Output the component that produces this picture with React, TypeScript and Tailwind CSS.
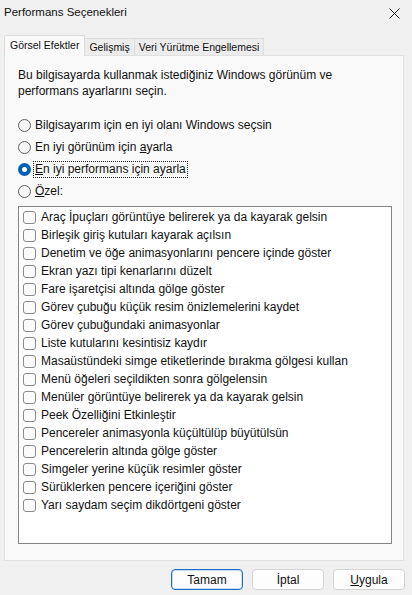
import React from 'react';

const effects = [
  'Araç İpuçları görüntüye belirerek ya da kayarak gelsin',
  'Birleşik giriş kutuları kayarak açılsın',
  'Denetim ve öğe animasyonlarını pencere içinde göster',
  'Ekran yazı tipi kenarlarını düzelt',
  'Fare işaretçisi altında gölge göster',
  'Görev çubuğu küçük resim önizlemelerini kaydet',
  'Görev çubuğundaki animasyonlar',
  'Liste kutularını kesintisiz kaydır',
  'Masaüstündeki simge etiketlerinde bırakma gölgesi kullan',
  'Menü öğeleri seçildikten sonra gölgelensin',
  'Menüler görüntüye belirerek ya da kayarak gelsin',
  'Peek Özelliğini Etkinleştir',
  'Pencereler animasyonla küçültülüp büyütülsün',
  'Pencerelerin altında gölge göster',
  'Simgeler yerine küçük resimler göster',
  'Sürüklerken pencere içeriğini göster',
  'Yarı saydam seçim dikdörtgeni göster',
];

const Radio: React.FC<{ checked?: boolean; children: React.ReactNode; focused?: boolean }> = ({ checked, children, focused }) => (
  <div className="flex items-center h-[22px]">
    {checked ? (
      <span className="w-[13px] h-[13px] rounded-full bg-[#005fb8] flex items-center justify-center shrink-0">
        <span className="w-[5px] h-[5px] rounded-full bg-white" />
      </span>
    ) : (
      <span className="w-[13px] h-[13px] rounded-full border border-[#5f5f5f] bg-[#f6f6f6] shrink-0" />
    )}
    <span className={`ml-[2px] leading-[15px] px-px ${focused ? 'border border-dotted border-[#222]' : 'border border-transparent'}`}>
      {children}
    </span>
  </div>
);

const App: React.FC = () => {
  return (
    <div className="w-[412px] h-[595px] bg-[#f0f0f0] text-[12px] text-[#111] flex flex-col overflow-hidden font-['Liberation_Sans',Arial,sans-serif]">
      {/* title bar */}
      <div className="h-[35px] flex items-start justify-between pl-[4px] pr-[12px]">
        <span className="mt-[4px] leading-[16px] text-[11.5px]">Performans Seçenekleri</span>
        <svg width="11" height="11" viewBox="0 0 11 11" className="mt-[8px]">
          <path d="M0.5 0.5 L10.5 10.5 M10.5 0.5 L0.5 10.5" stroke="#222" strokeWidth="1" />
        </svg>
      </div>

      {/* tabs */}
      <div className="flex items-end ml-[4px] h-[20px] relative z-10 text-[10.5px]">
        <div className="h-[21px] px-[5px] bg-[#f9f9f9] border border-b-0 border-[#dcdcdc] rounded-t-[2px] flex items-center -mb-px">
          Görsel Efektler
        </div>
        <div className="h-[17px] px-[4px] bg-[#ececec] border border-l-0 border-b-0 border-[#dcdcdc] flex items-center pt-[2px]">
          Gelişmiş
        </div>
        <div className="h-[17px] px-[4px] bg-[#ececec] border border-l-0 border-b-0 border-[#dcdcdc] flex items-center pt-[2px]">
          Veri Yürütme Engellemesi
        </div>
      </div>

      {/* panel */}
      <div className="ml-[4px] w-[400px] h-[506px] bg-[#f9f9f9] border border-[#e0e0e0] pt-[11px] pl-[13px] pr-[12px]">
        <p className="leading-[16px] w-[330px]">
          Bu bilgisayarda kullanmak istediğiniz Windows görünüm ve performans ayarlarını seçin.
        </p>
        <div className="mt-[15px] flex flex-col">
          <Radio>
            Bil<u>g</u>isayarım için en iyi olanı Windows seçsin
          </Radio>
          <Radio>
            En iyi görünüm için <u>a</u>yarla
          </Radio>
          <Radio checked focused>
            <u>E</u>n iyi performans için ayarla
          </Radio>
          <Radio>
            <u>Ö</u>zel:
          </Radio>
        </div>
        <div className="mt-[4px] w-[374px] h-[338px] bg-white border border-[#858585] pl-[4px] pt-px">
          {effects.map((e) => (
            <div key={e} className="flex items-center h-[18px]">
              <span className="w-[13px] h-[13px] rounded-[3px] border border-[#8a8a8a] bg-[#fbfbfb] shrink-0" />
              <span className="ml-[5px] leading-[16px]">{e}</span>
            </div>
          ))}
        </div>
      </div>

      {/* buttons */}
      <div className="mt-[8px] flex justify-end gap-[9px] pr-[7px]">
        <button className="w-[72px] h-[21px] rounded-[4px] bg-[#fdfdfd] border border-[#1e6fbf] shadow-[inset_0_0_0_1px_#c9ddf2] leading-[18px]">
          Tamam
        </button>
        <button className="w-[72px] h-[21px] rounded-[4px] bg-[#fdfdfd] border border-[#d3d3d3] leading-[18px]">
          İptal
        </button>
        <button className="w-[72px] h-[21px] rounded-[4px] bg-[#fdfdfd] border border-[#d3d3d3] leading-[18px]">
          <u>U</u>ygula
        </button>
      </div>
    </div>
  );
};

export default App;
